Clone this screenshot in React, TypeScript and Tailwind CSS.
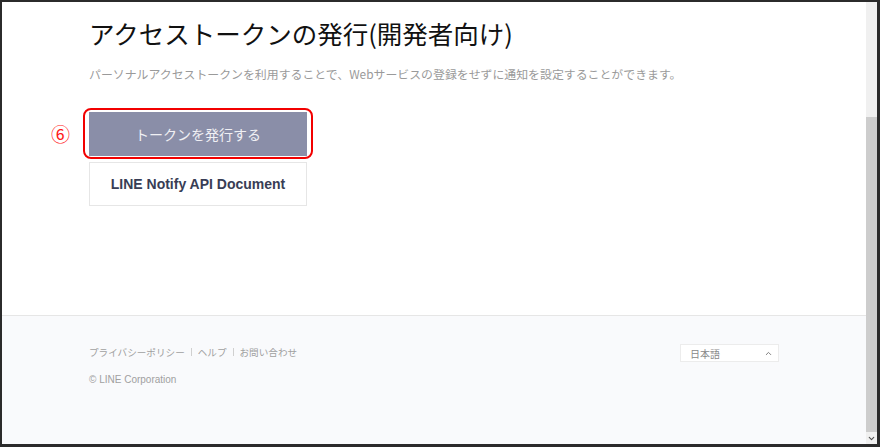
import { ChevronUp, ChevronDown } from "lucide-react";

const JP = "font-['Meiryo','Noto_Sans_CJK_JP','Noto_Sans',sans-serif]";

function Scrollbar() {
  return (
    <div className="flex w-[11px] flex-col bg-[#f0f0f0]">
      <div className="h-[115px]" />
      <div className="flex-1 bg-[#cdcdcd]" />
      <div className="flex h-[12px] items-center justify-center bg-[#f0f0f0]">
        <ChevronDown className="h-[9px] w-[9px] text-[#505050]" strokeWidth={3} />
      </div>
    </div>
  );
}

export default function App() {
  return (
    <div className="h-[447px] w-[880px] overflow-hidden bg-[#2b2b2b]">
      <div className="flex h-[444px] w-[877px] pl-[2px] pt-[2px]">
        <div className={`flex flex-1 flex-col bg-white ${JP}`}>
          <main className="h-[313px] pl-[87px] pt-[11px]">
            <h1 className="text-[25.5px] leading-[40px] font-normal text-[#111]">
              アクセストークンの発行(開発者向け)
            </h1>
            <p className="mt-[12px] text-[11.9px] leading-[18px] text-[#9a9a9a]">
              パーソナルアクセストークンを利用することで、Webサービスの登録をせずに通知を設定することができます。
            </p>

            <div className="relative mt-[29px] w-[218px]">
              <span className="absolute left-[-38px] top-[12px] text-[19px] leading-[20px] text-[#ff1a1a]">
                ⑥
              </span>
              <button className="flex h-[44px] w-[218px] items-center justify-center bg-[#8a8ea8] text-[14px] text-[#f0f0f4]">
                トークンを発行する
              </button>
              <div className="pointer-events-none absolute -inset-x-[6px] -top-[4px] -bottom-[3px] rounded-[8px] border-2 border-[#f20000]" />
            </div>

            <button className="mt-[6px] flex h-[44px] w-[218px] items-center justify-center border border-[#e6e6e6] bg-white font-['Liberation_Sans',Arial,sans-serif] text-[14px] font-bold text-[#383d55]">
              LINE Notify API Document
            </button>
          </main>

          <footer className="flex flex-1 border-t border-[#e6e6e6] bg-[#f9fafc] pl-[87px] pr-[87px] pt-[29px]">
            <div className="flex-1">
              <div className="flex items-center text-[9.6px] leading-[14px] text-[#a0a0a0]">
                <span>プライバシーポリシー</span>
                <span className="mx-[6px] h-[8px] w-px bg-[#d0d0d0]" />
                <span>ヘルプ</span>
                <span className="mx-[6px] h-[8px] w-px bg-[#d0d0d0]" />
                <span>お問い合わせ</span>
              </div>
              <p className="mt-[14px] font-['Liberation_Sans',Arial,sans-serif] text-[10px] leading-[14px] text-[#a0a0a0]">
                © LINE Corporation
              </p>
            </div>
            <div className="mt-[-1px] flex h-[18px] w-[99px] items-center justify-between border border-[#ececec] bg-white pl-[9px] pr-[5px]">
              <span className="text-[10px] text-[#888]">日本語</span>
              <ChevronUp className="h-[9px] w-[9px] text-[#777]" strokeWidth={2.5} />
            </div>
          </footer>
        </div>
        <Scrollbar />
      </div>
    </div>
  );
}
